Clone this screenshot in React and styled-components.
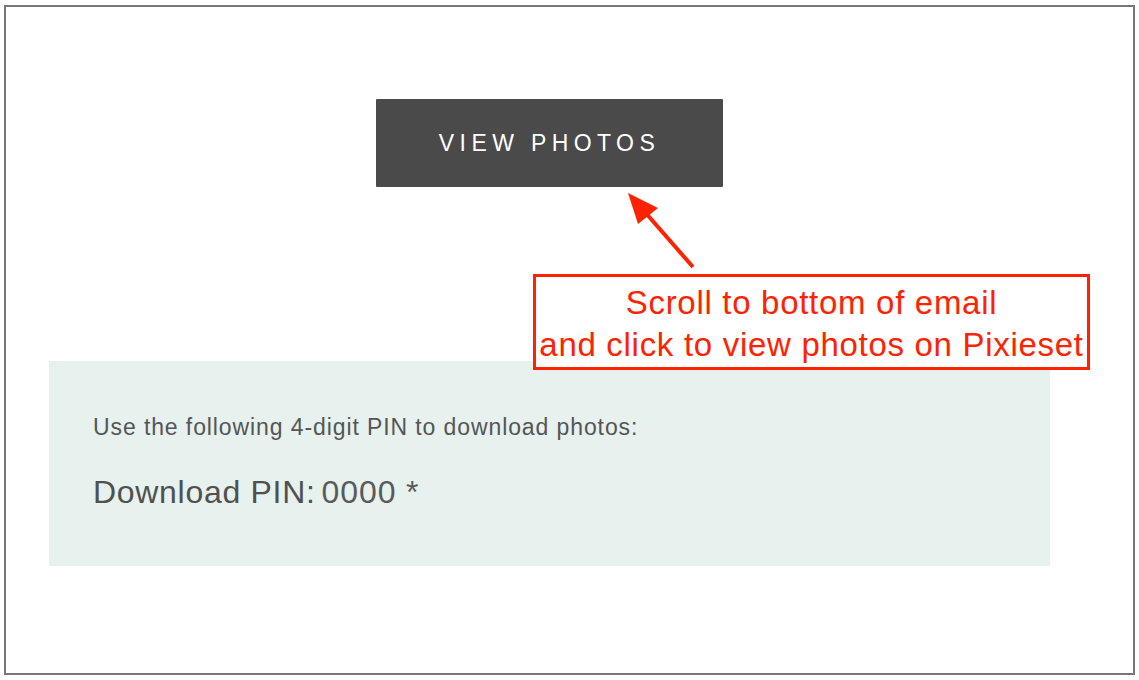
import React from 'react'
import styled, { createGlobalStyle } from 'styled-components'

const GlobalStyle = createGlobalStyle`
  html, body {
    margin: 0;
    padding: 0;
    background: #ffffff;
  }
  body {
    font-family: "Liberation Sans", Arial, Helvetica, sans-serif;
  }
`

const Frame = styled.div`
  position: relative;
  box-sizing: border-box;
  width: 1131px;
  height: 670px;
  margin: 5px 0 0 4px;
  border: 2px solid #777777;
  background: #ffffff;
  padding: 92px 0 0 43px;
`

const Column = styled.div`
  width: 1001px;
  display: flex;
  flex-direction: column;
  align-items: center;
`

const ViewButton = styled.a`
  box-sizing: border-box;
  width: 347px;
  height: 88px;
  background: #4a4a4a;
  border-radius: 1px;
  display: flex;
  align-items: center;
  justify-content: center;
  color: #ffffff;
  font-size: 23px;
  letter-spacing: 5.4px;
  text-decoration: none;
  padding-left: 0;
  cursor: pointer;
`

const PinPanel = styled.div`
  box-sizing: border-box;
  align-self: stretch;
  margin-top: 174px;
  height: 205px;
  background: #e7f1ee;
  padding: 52px 44px 0;
  color: #555555;
`

const PinHint = styled.p`
  margin: 0;
  font-size: 23px;
  letter-spacing: 0.9px;
  line-height: 28px;
`

const PinLine = styled.div`
  margin-top: 33px;
  display: flex;
  align-items: baseline;
  gap: 6px;
`

const PinLabel = styled.span`
  font-size: 32px;
  letter-spacing: 0.7px;
  color: #505050;
`

const PinValue = styled.span`
  font-size: 32px;
  letter-spacing: 0.9px;
  color: #5a5a5a;
`

const Callout = styled.div`
  position: absolute;
  left: 527px;
  top: 267px;
  width: 557px;
  height: 96px;
  box-sizing: border-box;
  border: 3px solid #ff2200;
  background: #ffffff;
  color: #ff2200;
  font-size: 33px;
  letter-spacing: 0.7px;
  line-height: 42px;
  text-align: center;
  padding-top: 5px;
  white-space: nowrap;
`

const Arrow = styled.svg`
  position: absolute;
  left: 614px;
  top: 180px;
  overflow: visible;
`

const App = () => {
  return (
    <>
      <GlobalStyle />
      <Frame>
        <Column>
          <ViewButton>VIEW PHOTOS</ViewButton>
          <PinPanel>
            <PinHint>Use the following 4-digit PIN to download photos:</PinHint>
            <PinLine>
              <PinLabel>Download PIN:</PinLabel>
              <PinValue>0000 *</PinValue>
            </PinLine>
          </PinPanel>
        </Column>
        <Arrow width="90" height="90" viewBox="0 0 90 90">
          {/* tail at page (693,267), tip at (629,194) */}
          <line x1="73" y1="80" x2="24" y2="24" stroke="#ff2200" strokeWidth="4" />
          <polygon points="8,6 18,37 38,21" fill="#ff2200" />
        </Arrow>
        <Callout>
          Scroll to bottom of email
          <br />
          and click to view photos on Pixieset
        </Callout>
      </Frame>
    </>
  )
}

export default App
